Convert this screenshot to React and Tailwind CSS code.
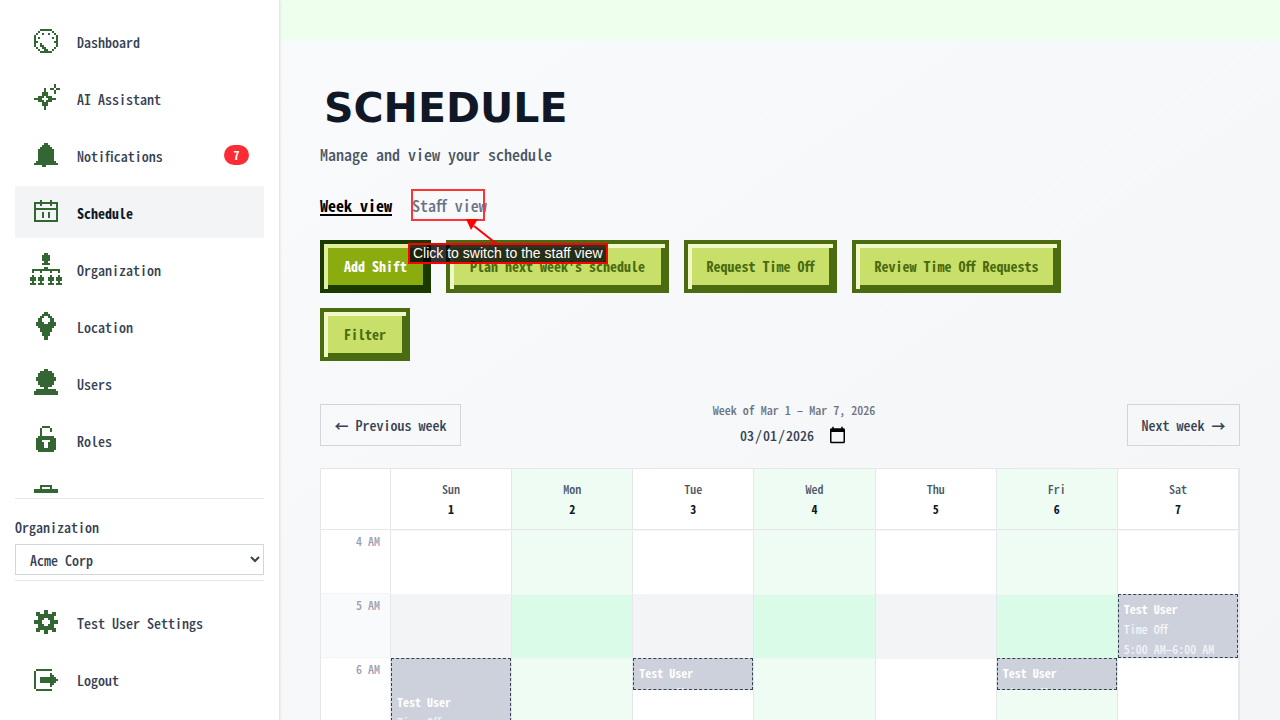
import { useState } from "react";

// Each icon is a list of rows on a 16x16 grid: [row, start, end, start, end, ...]
const ICONS = {
  dashboard: [
    [2, 5, 10], [3, 4, 4, 11, 11], [4, 3, 3, 6, 6, 9, 9, 12, 12], [5, 2, 2, 13, 13],
    [6, 2, 2, 4, 4, 11, 11, 13, 13], [7, 2, 2, 13, 13], [8, 2, 3, 12, 13], [9, 2, 2, 5, 5, 13, 13],
    [10, 2, 2, 5, 6, 13, 13], [11, 3, 3, 6, 7, 12, 12], [12, 4, 4, 7, 8, 11, 11], [13, 5, 10],
  ],
  assistant: [
    [1, 12, 12], [2, 12, 12], [3, 7, 7, 10, 11, 13, 14], [4, 7, 7, 12, 12], [5, 6, 8, 12, 12],
    [6, 6, 8], [7, 4, 6, 8, 10], [8, 2, 5, 9, 12], [9, 4, 6, 8, 10], [10, 6, 8], [11, 6, 8],
    [12, 7, 7], [13, 7, 7],
  ],
  bell: [
    [2, 7, 8], [3, 6, 9], [4, 5, 10], [5, 4, 11], [6, 4, 11], [7, 4, 11], [8, 4, 11],
    [9, 4, 11], [10, 4, 11], [11, 3, 12], [12, 2, 13], [13, 6, 7],
  ],
  calendar: [
    [2, 5, 5, 10, 10], [3, 2, 13], [4, 2, 2, 5, 5, 10, 10, 13, 13], [5, 2, 2, 13, 13], [6, 2, 13],
    [7, 2, 2, 13, 13], [8, 2, 2, 6, 6, 9, 9, 13, 13], [9, 2, 2, 6, 6, 9, 9, 13, 13],
    [10, 2, 2, 6, 6, 9, 9, 13, 13], [11, 2, 2, 13, 13], [12, 2, 13],
  ],
  organization: [
    [0, 7, 8], [1, 6, 9], [2, 6, 9], [3, 6, 9], [4, 7, 8], [5, 6, 9], [7, 7, 8], [8, 1, 14],
    [9, 1, 1, 5, 5, 10, 10, 14, 14], [11, 1, 1, 5, 5, 10, 10, 14, 14],
    [12, 0, 2, 4, 6, 9, 11, 13, 15], [13, 0, 2, 4, 6, 9, 11, 13, 15],
    [14, 1, 1, 5, 5, 10, 10, 14, 14], [15, 0, 2, 4, 6, 9, 11, 13, 15],
  ],
  location: [
    [1, 7, 8], [2, 6, 9], [3, 5, 6, 9, 10], [4, 4, 5, 10, 11], [5, 4, 5, 10, 11], [6, 3, 6, 9, 12],
    [7, 3, 12], [8, 4, 11], [9, 5, 10], [10, 5, 10], [11, 6, 9], [12, 6, 9], [13, 7, 8], [14, 7, 8],
  ],
  users: [
    [1, 7, 8], [2, 5, 10], [3, 4, 11], [4, 4, 11], [5, 3, 12], [6, 3, 12], [7, 4, 11], [8, 4, 11],
    [9, 5, 10], [10, 7, 8], [11, 3, 12], [12, 2, 13], [13, 2, 13],
  ],
  roles: [
    [1, 6, 9], [2, 5, 5, 10, 10], [3, 5, 5, 10, 10], [4, 5, 5], [5, 5, 5], [6, 4, 11], [7, 3, 12],
    [8, 3, 5, 10, 12], [9, 3, 6, 9, 12], [10, 3, 6, 9, 12], [11, 3, 6, 9, 12], [12, 3, 12], [13, 4, 11],
  ],
  toolbox: [
    [2, 5, 10], [3, 5, 5, 10, 10], [4, 2, 13], [5, 2, 13], [6, 2, 13], [7, 2, 13], [8, 2, 6, 9, 13],
    [9, 2, 13], [10, 2, 13], [11, 2, 13], [12, 2, 13],
  ],
  settings: [
    [2, 7, 8], [3, 3, 4, 7, 8, 11, 12], [4, 3, 12], [5, 4, 11], [6, 4, 6, 9, 11], [7, 2, 5, 10, 13],
    [8, 2, 5, 10, 13], [9, 4, 6, 9, 11], [10, 4, 11], [11, 3, 12], [12, 3, 4, 7, 8, 11, 12], [13, 7, 8],
  ],
  logout: [
    [3, 3, 10], [4, 2, 2], [5, 2, 2, 10, 10], [6, 2, 2, 10, 11], [7, 2, 2, 5, 12], [8, 2, 2, 5, 13],
    [9, 2, 2, 5, 12], [10, 2, 2, 10, 11], [11, 2, 2, 10, 10], [12, 2, 2], [13, 3, 10],
  ],
};

const PixelIcon = ({ name }) => (
  <svg
    viewBox="0 0 16 16"
    shapeRendering="crispEdges"
    className="size-8 shrink-0 fill-[#336633]"
    aria-hidden="true"
  >
    {ICONS[name].flatMap(([y, ...spans]) =>
      spans.map((x, i) =>
        i % 2 === 0 ? (
          <rect key={`${y}-${x}`} x={x} y={y} width={spans[i + 1] - x + 1} height="1" />
        ) : null
      )
    )}
  </svg>
);

const NAV = [
  { icon: "dashboard", label: "Dashboard" },
  { icon: "assistant", label: "AI Assistant" },
  { icon: "bell", label: "Notifications", badge: 7 },
  { icon: "calendar", label: "Schedule", active: true },
  { icon: "organization", label: "Organization" },
  { icon: "location", label: "Location" },
  { icon: "users", label: "Users" },
  { icon: "roles", label: "Roles" },
  { icon: "toolbox", label: "Jobs" },
];

const NavItem = ({ icon, label, badge, active }) => (
  <a
    href="#"
    className={`flex h-[52px] shrink-0 items-center gap-[15px] px-[15px] text-sm ${
      active ? "bg-gray-100 font-bold text-gray-900" : "font-medium text-gray-700"
    }`}
  >
    <PixelIcon name={icon} />
    <span className="pt-[2px]">{label}</span>
    {badge && (
      <span className="ml-auto min-w-[25px] rounded-full bg-[#fb2c36] text-center text-xs leading-5 font-bold text-white">
        {badge}
      </span>
    )}
  </a>
);

const Sidebar = () => {
  const [org, setOrg] = useState("Acme Corp");

  return (
    <aside className="relative z-10 flex w-[280px] shrink-0 flex-col border-r border-gray-200 bg-white px-[15px] shadow-sm">
      <nav className="mb-[5px] flex min-h-0 flex-1 flex-col gap-[5px] overflow-hidden pt-[15px]">
        {NAV.map((item) => (
          <NavItem key={item.label} {...item} />
        ))}
      </nav>

      <div className="flex flex-col border-t border-gray-200 pt-[18px] pb-[5px]">
        <label htmlFor="org" className="mb-[7px] text-sm leading-5 font-medium text-gray-700">
          Organization
        </label>
        <select
          id="org"
          value={org}
          onChange={(e) => setOrg(e.target.value)}
          className="h-[31px] w-full border border-gray-300 bg-white px-[10px] text-sm font-medium text-gray-700"
        >
          <option>Acme Corp</option>
        </select>
      </div>

      <div className="flex flex-col gap-[5px] border-t border-gray-200 py-[15px]">
        <NavItem icon="settings" label="Test User Settings" />
        <NavItem icon="logout" label="Logout" />
      </div>
    </aside>
  );
};

const PixelButton = ({ primary, width, children }) => (
  <button
    className={`h-[53px] border-4 pb-[2px] text-center text-sm font-bold whitespace-nowrap ${width} ${
      primary
        ? "border-[#1a3a00] bg-[#8bac0f] text-white shadow-[inset_4px_4px_0_#e0f0a0,inset_-4px_-4px_0_#1a3a00]"
        : "border-[#4a6b0f] bg-[#c8df6a] text-[#4a6b0f] shadow-[inset_4px_4px_0_#f0f8c8,inset_-4px_-4px_0_#4a6b0f]"
    }`}
  >
    {children}
  </button>
);

const DAYS = ["Sun", "Mon", "Tue", "Wed", "Thu", "Fri", "Sat"];
const HOURS = ["4 AM", "5 AM", "6 AM", "7 AM"];

const EVENTS = {
  "6 AM-0": { size: "h-32 pt-[33px]", time: "6:00 AM–8:00 AM" },
  "6 AM-2": { size: "h-8 pt-1", time: "6:00 AM–6:30 AM" },
  "6 AM-5": { size: "h-8 pt-1", time: "6:00 AM–6:30 AM" },
  "5 AM-6": { size: "h-16 pt-1", time: "5:00 AM–6:00 AM" },
};

const EventCard = ({ size, time }) => (
  <div
    className={`absolute inset-x-0 top-0 z-10 overflow-hidden border border-dashed border-gray-700 bg-[#cdd1db] px-[5px] text-xs leading-5 font-bold text-gray-100 ${size}`}
  >
    <div className="text-white">Test User</div>
    <div className="font-medium">Time Off</div>
    <div className="font-medium whitespace-nowrap">{time}</div>
  </div>
);

const cellColor = (hour, day) => {
  const green = day % 2 === 1;
  if (hour === "5 AM") return green ? "bg-[#dafbe7]" : "bg-gray-100";
  return green ? "bg-[#effcf4]" : "bg-white";
};

const WeekGrid = () => (
  <table className="mt-[18px] w-full table-fixed border-separate border-spacing-0 border border-gray-200 bg-white">
    <colgroup>
      <col className="w-[70px]" />
      {DAYS.map((day) => (
        <col key={day} />
      ))}
    </colgroup>
    <thead>
      <tr className="h-[61px] text-xs leading-5">
        <th className="border-r border-b border-gray-200" aria-label="Time" />
        {DAYS.map((day, i) => (
          <th
            key={day}
            className={`border-r border-b border-gray-200 p-0 ${i % 2 === 1 ? "bg-[#effcf4]" : "bg-white"}`}
          >
            <div className="font-medium text-gray-600">{day}</div>
            <div className="font-bold text-gray-900">{i + 1}</div>
          </th>
        ))}
      </tr>
    </thead>
    <tbody>
      {HOURS.map((hour) => (
        <tr key={hour} className="h-16">
          <th
            className={`border-r border-b border-r-gray-200 border-b-gray-100 p-0 pt-px pr-[10px] text-right align-top text-xs leading-5 font-medium text-gray-400 ${
              hour === "5 AM" ? "bg-gray-50" : "bg-white"
            }`}
          >
            {hour}
          </th>
          {DAYS.map((day, i) => (
            <td
              key={day}
              className={`border-t border-r border-t-gray-100 border-r-gray-200 p-0 align-top ${cellColor(hour, i)}`}
            >
              {EVENTS[`${hour}-${i}`] && (
                <div className="relative -mt-px">
                  <EventCard {...EVENTS[`${hour}-${i}`]} />
                </div>
              )}
            </td>
          ))}
        </tr>
      ))}
    </tbody>
  </table>
);

// Red frame, arrow and caption that point at the staff tab
const StaffHint = () => (
  <>
    <span className="pointer-events-none absolute -inset-x-px inset-y-0 border-2 border-[#ff3333]" />
    <svg
      viewBox="0 0 40 28"
      className="pointer-events-none absolute top-[30px] left-[50px] z-20 h-7 w-10"
      aria-hidden="true"
    >
      <path d="M36 26 12 7" stroke="#f00" strokeWidth="2" />
      <path d="M4 0h12l-7 11z" fill="#f00" />
    </svg>
    <span className="pointer-events-none absolute top-[54px] -left-1 z-20 border-2 border-[#f00] bg-black/80 px-[3px] font-['Liberation_Sans',Arial,sans-serif] text-sm leading-[17px] font-normal whitespace-nowrap text-white">
      Click to switch to the staff view
    </span>
  </>
);

const App = () => {
  const [date, setDate] = useState("2026-03-01");

  return (
    <div className="flex h-screen overflow-hidden bg-white font-['Noto_Sans_CJK_JP','Liberation_Mono',monospace] [font-feature-settings:'hwid']">
      <Sidebar />

      <div className="flex min-w-0 flex-1 flex-col">
        <div className="h-10 shrink-0 bg-[#eeffee]" />

        <main className="min-h-0 flex-1 overflow-hidden bg-linear-to-br from-gray-50 to-[#f4f5f7] px-10 pt-12">
          <h1 className="pl-1 font-['DejaVu_Sans',sans-serif] text-[41px] leading-10 font-bold text-gray-900">
            SCHEDULE
          </h1>
          <p className="mt-[14px] text-base leading-6 font-medium text-gray-600">
            Manage and view your schedule
          </p>

          <div className="mt-[23px] flex gap-5 text-base leading-8 font-medium">
            <button className="w-[72px] font-bold whitespace-nowrap text-black underline decoration-2 underline-offset-2">
              Week view
            </button>
            <div className="relative">
              <button className="w-[72px] whitespace-nowrap text-gray-500">Staff view</button>
              <StaffHint />
            </div>
          </div>

          <div className="mt-[19px] flex max-w-[840px] flex-wrap gap-[15px]">
            <PixelButton primary width="w-[111px]">Add Shift</PixelButton>
            <PixelButton width="w-[223px]">Plan next week's schedule</PixelButton>
            <PixelButton width="w-[153px]">Request Time Off</PixelButton>
            <PixelButton width="w-[209px]">Review Time Off Requests</PixelButton>
            <PixelButton width="w-[90px]">Filter</PixelButton>
          </div>

          <div className="mt-[39px] flex items-center justify-between text-sm font-medium text-gray-700">
            <button className="h-[42px] w-[141px] border border-gray-300 whitespace-nowrap">
              <span className="font-bold">←</span> Previous week
            </button>
            <div className="flex flex-col items-center">
              <label htmlFor="week" className="text-xs leading-5 text-gray-500">
                Week of Mar 1 – Mar 7, 2026
              </label>
              <input
                id="week"
                type="date"
                value={date}
                onChange={(e) => setDate(e.target.value)}
                className="h-[30px] w-[138px] px-[14px] [&::-webkit-calendar-picker-indicator]:m-0 [&::-webkit-calendar-picker-indicator]:size-[19px]"
              />
            </div>
            <button className="h-[42px] w-[113px] border border-gray-300 whitespace-nowrap">
              Next week <span className="font-bold">→</span>
            </button>
          </div>

          <WeekGrid />
        </main>
      </div>
    </div>
  );
};

export default App;
